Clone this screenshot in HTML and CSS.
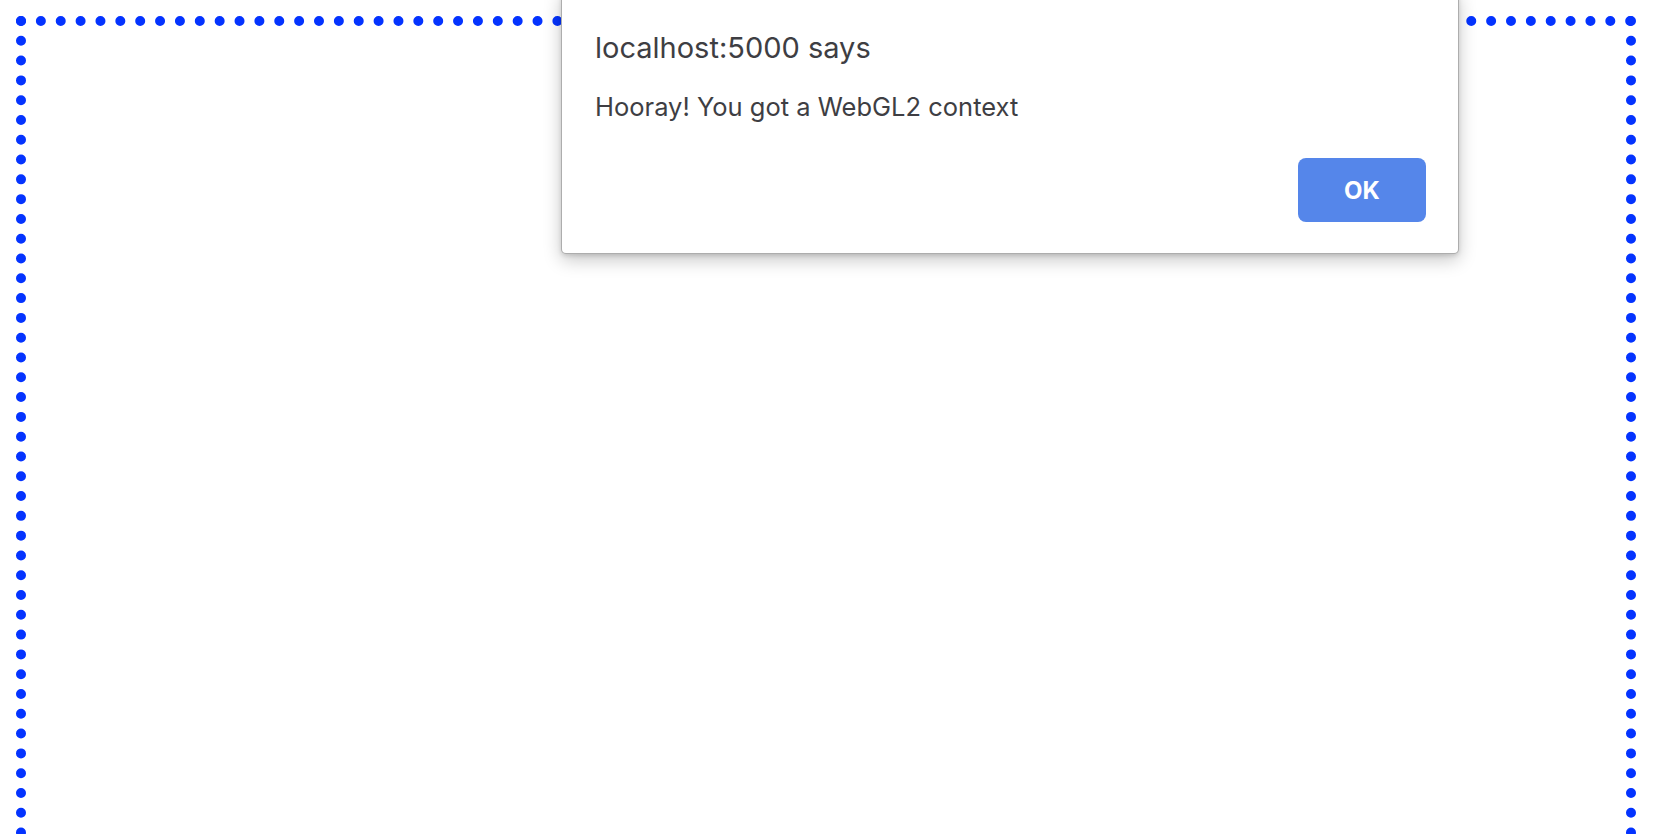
FILE: index.html
```html
<!DOCTYPE html>
<html lang="en">
<head>
<meta charset="utf-8">
<title>WebGL2</title>
<link rel="stylesheet" href="styles.css">
</head>
<body>
<div class="page">
  <div class="canvas-box"></div>
</div>
<div class="alert" role="alertdialog">
  <div class="alert-title">localhost:5000 says</div>
  <div class="alert-message">Hooray! You got a WebGL2 context</div>
  <div class="alert-actions">
    <button class="alert-ok" type="button">OK</button>
  </div>
</div>
</body>
</html>
```

FILE: styles.css
```css
html, body {
  margin: 0;
  padding: 0;
  overflow: hidden;
  background: #ffffff;
  height: 100%;
}

.page {
  padding: 16px;
}

.canvas-box {
  width: 1600px;
  height: 1000px;
  border: 10px dotted #0433ff;
}

.alert {
  position: absolute;
  left: 561px;
  top: -10px;
  width: 898px;
  box-sizing: border-box;
  padding: 39px 32px 31px 33px;
  background: #ffffff;
  border: 1px solid rgba(0, 0, 0, 0.32);
  border-radius: 5px;
  box-shadow: 0 6px 18px rgba(0, 0, 0, 0.22), 0 2px 4px rgba(0, 0, 0, 0.12);
  font-family: Inter, "Noto Sans", "Liberation Sans", sans-serif;
  color: #3e3e43;
}

.alert-title {
  font-size: 29px;
  line-height: 36px;
}

.alert-message {
  margin-top: 25px;
  font-size: 25.5px;
  line-height: 32px;
}

.alert-actions {
  display: flex;
  justify-content: flex-end;
  margin-top: 35px;
}

.alert-ok {
  width: 128px;
  height: 64px;
  border: none;
  border-radius: 8px;
  background: #5586ea;
  color: #ffffff;
  font-family: Inter, "Noto Sans", "Liberation Sans", sans-serif;
  font-weight: 700;
  font-size: 24px;
  padding: 0;
}
```
